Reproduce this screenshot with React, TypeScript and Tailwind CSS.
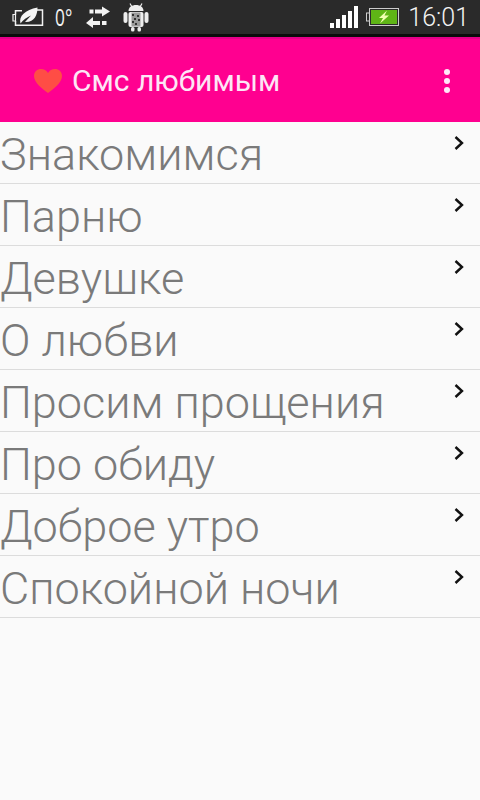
const ITEMS = [
  "Знакомимся",
  "Парню",
  "Девушке",
  "О любви",
  "Просим прощения",
  "Про обиду",
  "Доброе утро",
  "Спокойной ночи",
];

function LeafBattery() {
  return (
    <svg width="32" height="20" viewBox="0 0 32 20">
      <path d="M3.500 7.500V3.800H10M20 3H30.500V18.300H3.500V14" fill="none" stroke="#f2f2f2" strokeWidth="1.500" />
      <path d="M1 7.500H3.500V14H1z" fill="none" stroke="#f2f2f2" strokeWidth="1.200" />
      <path d="M8.500 16.500C6.500 9 13 3 25.500 0.500C25.500 8 22.500 15.500 13 15L19 8.500C15 10 11 13 8.500 16.500Z" fill="#f5f5f5" />
    </svg>
  );
}

function SyncArrows() {
  return (
    <svg width="24" height="22" viewBox="0 0 24 22">
      <path d="M3.500 3.500H7.500V7.500H3.500zM9 3.500H16V0.500L24 5.500L16 10.500V7.500H9z" fill="#f2f2f2" />
      <path d="M7 11V15H14V19H7V22L0 17zM16 15H20.500V19H16z" fill="#f2f2f2" />
    </svg>
  );
}

function AndroidDebug() {
  return (
    <svg width="26" height="30" viewBox="0 0 26 30">
      <path d="M7 1.500L9 5M19 1.500L17 5" stroke="#eee" strokeWidth="1.200" />
      <path d="M5.500 9C5.500 5 9 3 13 3C17 3 20.500 5 20.500 9z" fill="#eee" />
      <rect x="0.500" y="10" width="4" height="11" rx="2" fill="#eee" />
      <rect x="21.500" y="10" width="4" height="11" rx="2" fill="#eee" />
      <rect x="5.500" y="10" width="15" height="15" rx="2" fill="#eee" />
      <rect x="8" y="25" width="3.500" height="4.500" rx="1.500" fill="#eee" />
      <rect x="14.500" y="25" width="3.500" height="4.500" rx="1.500" fill="#eee" />
      <rect x="8.500" y="10.500" width="9" height="14" fill="#9a9a9a" />
      <path d="M9 12h2v2H9zM14 13h2v2h-2zM11 16h2v2h-2zM15 17h2v2h-2zM9 19h2v2H9zM12 21h2v2h-2z" fill="#333" />
    </svg>
  );
}

function SignalBars() {
  return (
    <div className="flex h-[22px] items-end gap-[2px]">
      <div className="h-[5px] w-[4px] bg-white" />
      <div className="h-[9px] w-[4px] bg-white" />
      <div className="h-[13px] w-[4px] bg-white" />
      <div className="h-[17px] w-[4px] bg-white" />
      <div className="h-[22px] w-[4px] bg-white" />
    </div>
  );
}

function ChargingBattery() {
  return (
    <svg width="33" height="18" viewBox="0 0 33 18">
      <rect x="0.500" y="5" width="3" height="8" fill="none" stroke="#ccc" />
      <rect x="3.500" y="0.500" width="29" height="17" fill="#2b2b2b" stroke="#ccc" />
      <rect x="5" y="2" width="26" height="14" fill="#5fb516" />
      <path d="M21 2.500L13 10H17L14 15.500L23 7.500H18.500Z" fill="#f0ffb0" />
    </svg>
  );
}

export default function App() {
  return (
    <div className="flex h-[800px] w-[480px] flex-col overflow-hidden bg-[#fafafa] font-['Roboto',sans-serif]">
      <div className="flex h-[37px] shrink-0 items-center border-b-[3px] border-[#0b0b0b] bg-[#2a2a2a] pl-[12px] pr-[11px]">
        <LeafBattery />
        <span className="ml-[11px] w-[15px] origin-left scale-x-[0.72] whitespace-nowrap font-['Open_Sans',sans-serif] text-[24px] leading-none text-[#f2f2f2]">0°</span>
        <div className="ml-[16px]"><SyncArrows /></div>
        <div className="ml-[13px]"><AndroidDebug /></div>
        <div className="ml-auto flex items-center">
          <SignalBars />
          <div className="ml-[8px]"><ChargingBattery /></div>
          <span className="ml-[9px] text-[25px] font-light leading-none text-[#f4f4f4]">16:01</span>
        </div>
      </div>

      <div className="flex h-[85px] shrink-0 items-center border-t-2 border-[#e6008a] bg-[#ff0090] pl-[33px] pr-[30px]">
        <svg width="30" height="26" viewBox="0 0 30 26">
          <path d="M15 25C10 21 1 15 1 8C1 3.500 4.500 1 8 1C11 1 13.500 2.500 15 5C16.500 2.500 19 1 22 1C25.500 1 29 3.500 29 8C29 15 20 21 15 25Z" fill="#ff4d45" />
        </svg>
        <span className="ml-[9px] text-[30px] leading-none text-[#fde6f6]">Смс любимым</span>
        <div className="ml-auto flex flex-col gap-[3px]">
          <div className="h-[6px] w-[6px] rounded-full bg-[#ffe8f8]" />
          <div className="h-[6px] w-[6px] rounded-full bg-[#ffe8f8]" />
          <div className="h-[6px] w-[6px] rounded-full bg-[#ffe8f8]" />
        </div>
      </div>

      <div className="flex flex-col">
        {ITEMS.map((item) => (
          <div key={item} className="relative h-[62px] border-b border-[#dcdcdc] pt-[9px]">
            <div className="whitespace-nowrap text-[45px] font-light leading-[48px] text-[#7a7a7a]">{item}</div>
            <svg className="absolute right-[15px] top-[13px]" width="12" height="16" viewBox="0 0 12 16">
              <path d="M2.500 2L9 8L2.500 14" fill="none" stroke="#111" strokeWidth="2.400" />
            </svg>
          </div>
        ))}
      </div>
    </div>
  );
}
